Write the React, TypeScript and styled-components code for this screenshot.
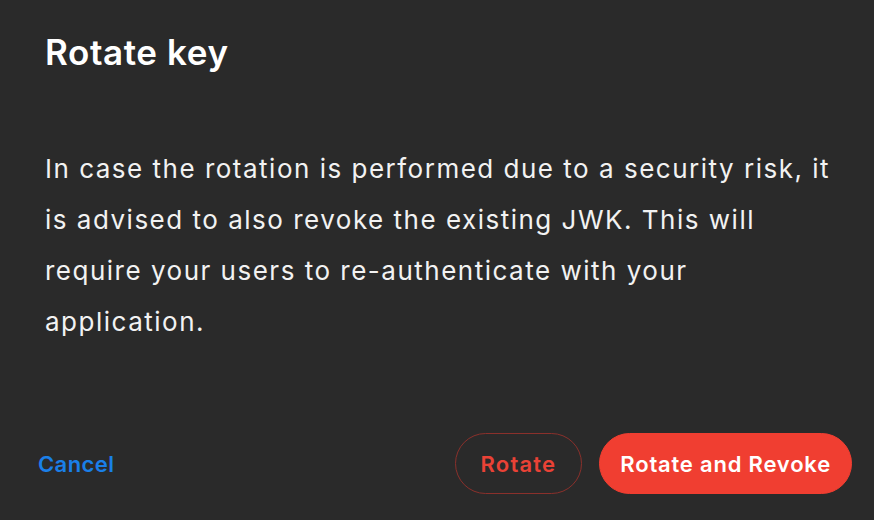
import styled, { createGlobalStyle } from "styled-components";

const Global = createGlobalStyle`
  html, body {
    margin: 0;
    padding: 0;
    background: #2a2a2a;
  }
  body {
    font-family: Inter, "Noto Sans", sans-serif;
    -webkit-font-smoothing: antialiased;
  }
`

const Dialog = styled.div`
  width: 874px;
  height: 520px;
  box-sizing: border-box;
  background: #2a2a2a;
  color: #ffffff;
  display: flex;
  flex-direction: column;
  padding: 28px 22px 26px 45px;
`

const Title = styled.h1`
  margin: 0;
  font-size: 35px;
  font-weight: 600;
  line-height: 48px;
  letter-spacing: 0.6px;
`

const Body = styled.p`
  margin: 67px 0 0 0;
  font-size: 26px;
  font-weight: 400;
  line-height: 51px;
  letter-spacing: 1.5px;
  max-width: 800px;
  color: #f2f2f2;
`

const Footer = styled.div`
  margin-top: auto;
  display: flex;
  align-items: center;
  margin-left: -7px;
`

const CancelLink = styled.button`
  background: none;
  border: none;
  padding: 0;
  font-family: inherit;
  font-size: 22px;
  font-weight: 600;
  letter-spacing: 0.4px;
  color: #1a7fe8;
  cursor: pointer;
  margin-right: auto;
`

const Pill = styled.button<{ $filled?: boolean }>`
  height: 61px;
  padding: 0 ${(p) => (p.$filled ? "20px" : "25px")};
  border-radius: 31px;
  font-family: inherit;
  font-size: 22px;
  font-weight: 600;
  letter-spacing: ${(p) => (p.$filled ? "0.8px" : "1.2px")};
  cursor: pointer;
  margin-left: 17px;
  background: ${(p) => (p.$filled ? "#f03e31" : "transparent")};
  border: 1.5px solid ${(p) => (p.$filled ? "#f03e31" : "#8a302b")};
  color: ${(p) => (p.$filled ? "#ffffff" : "#ea4236")};
`

export default function App() {
  return (
    <>
      <Global />
      <Dialog>
        <Title>Rotate key</Title>
        <Body>
          In case the rotation is performed due to a security risk, it is advised to also
          revoke the existing JWK. This will require your users to re-authenticate with
          your application.
        </Body>
        <Footer>
          <CancelLink>Cancel</CancelLink>
          <Pill>Rotate</Pill>
          <Pill $filled>Rotate and Revoke</Pill>
        </Footer>
      </Dialog>
    </>
  )
}
